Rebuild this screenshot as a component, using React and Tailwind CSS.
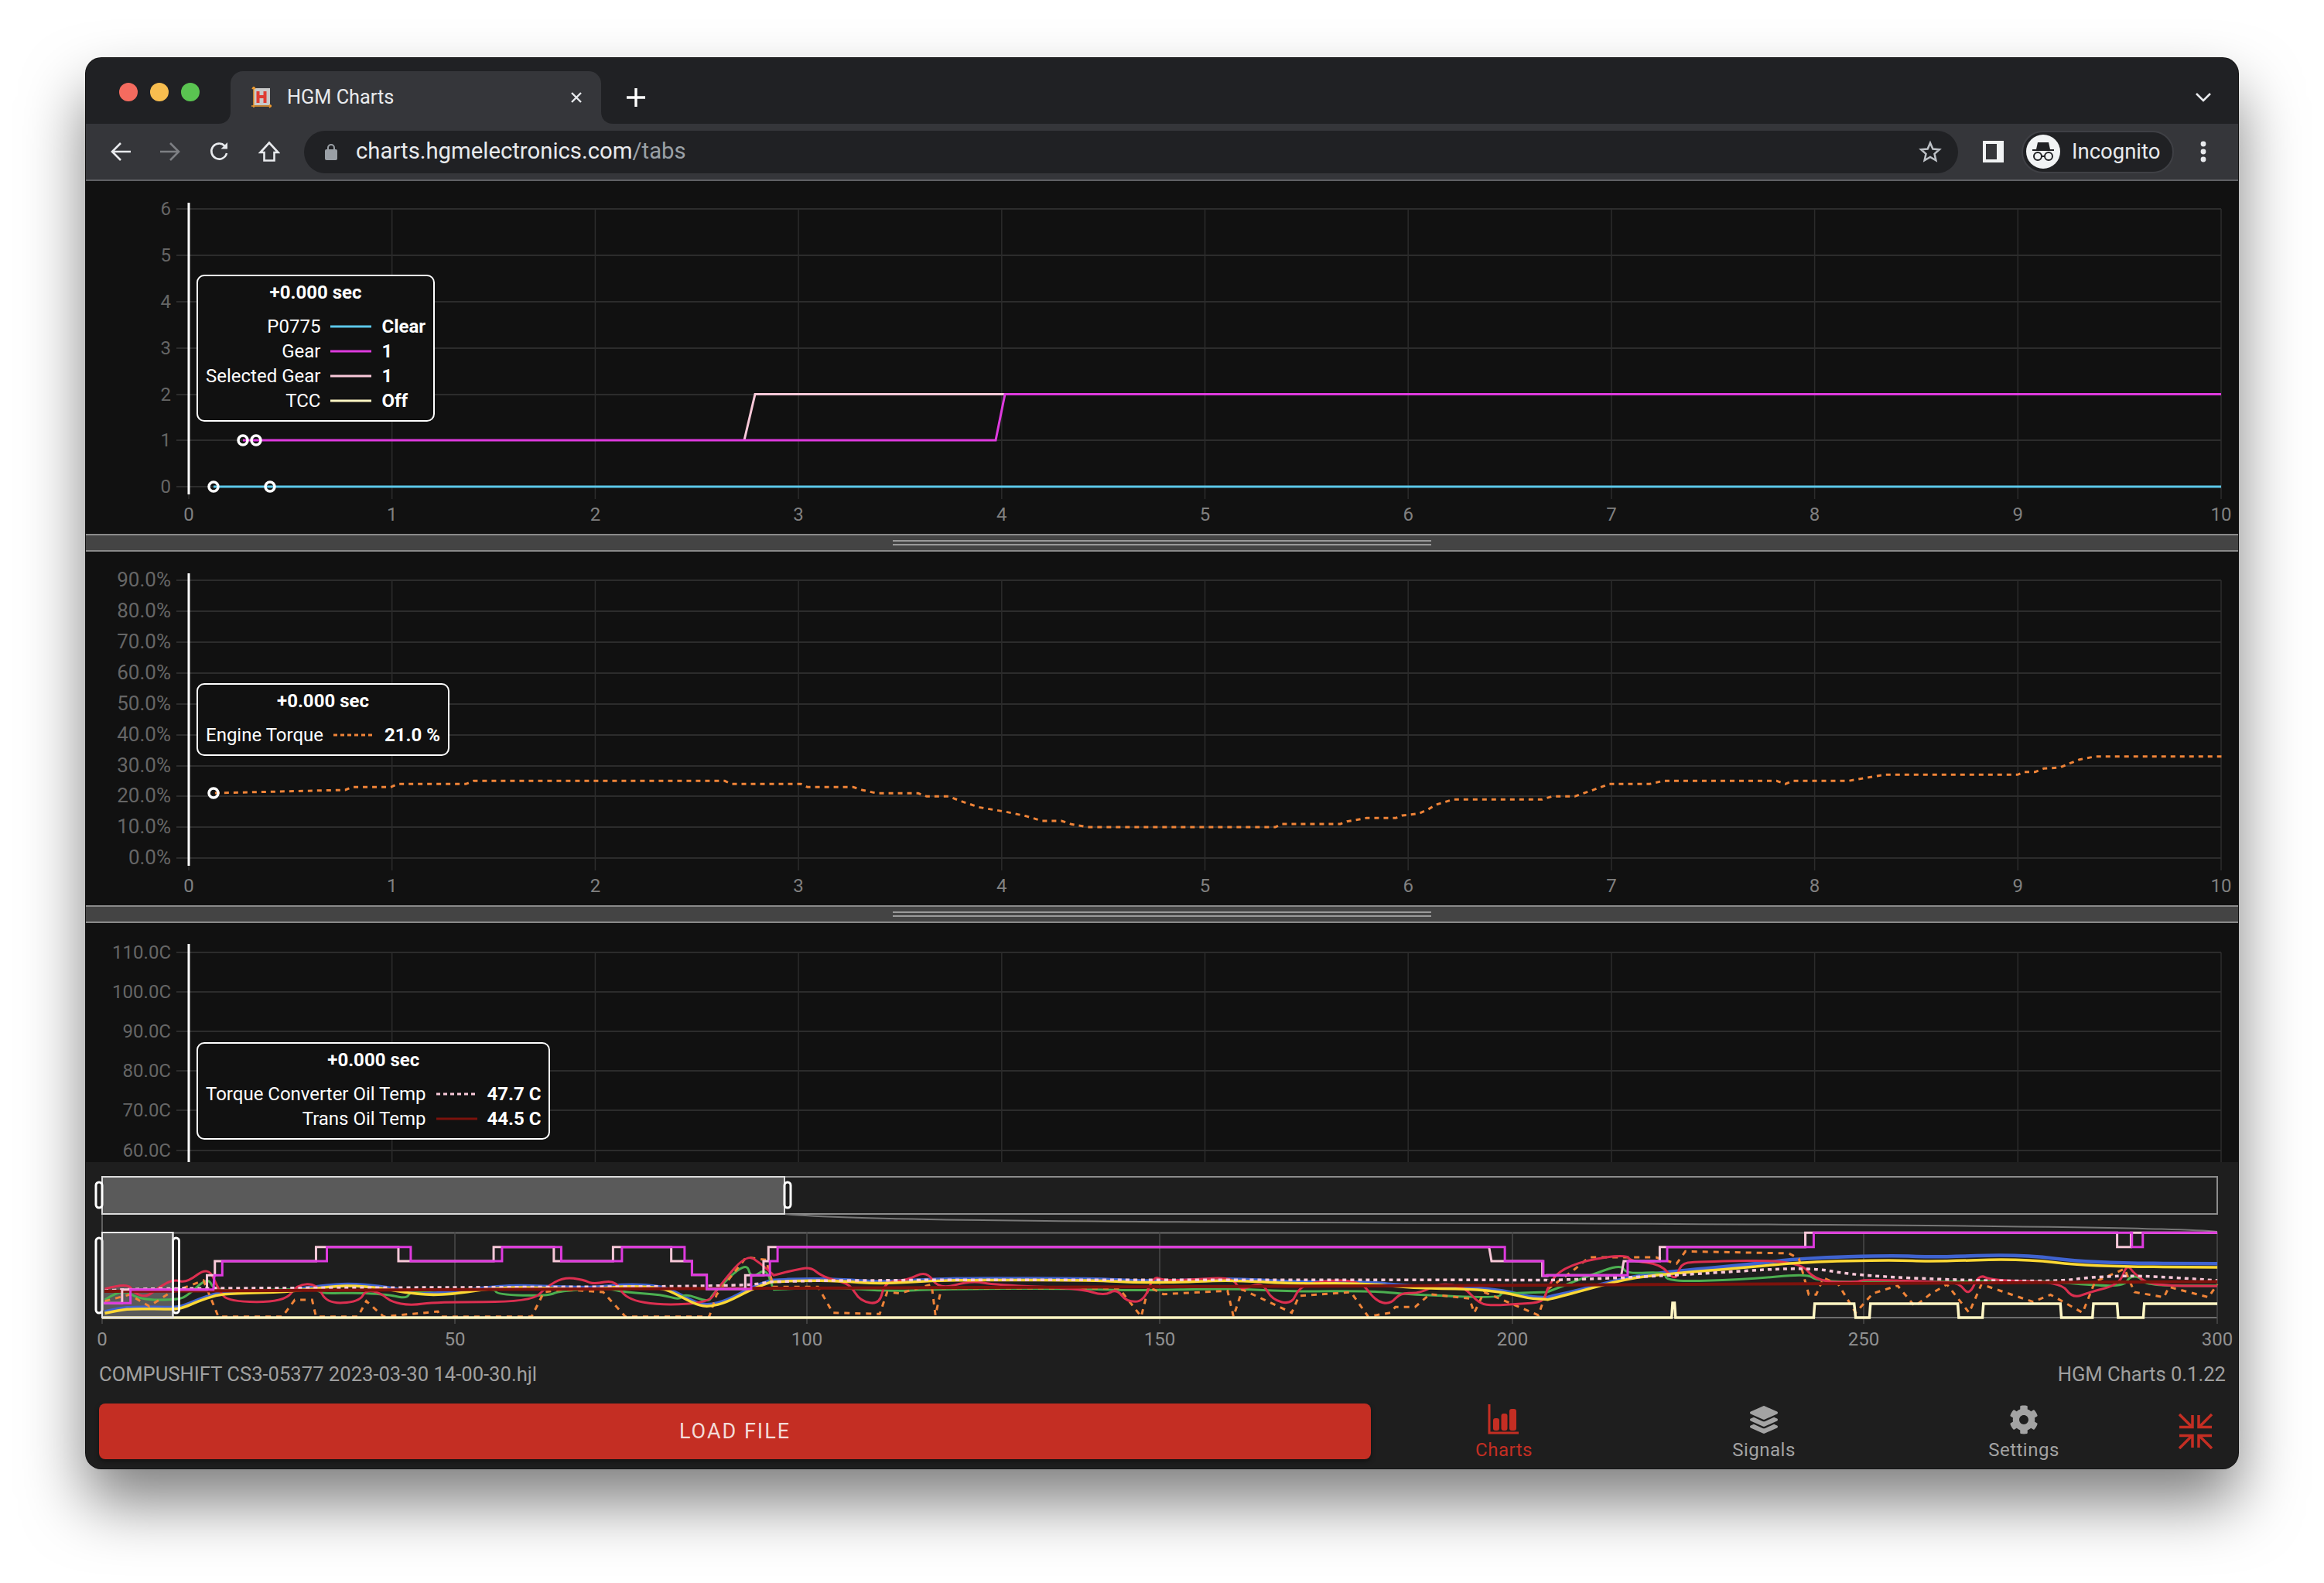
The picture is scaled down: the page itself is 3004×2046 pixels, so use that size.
import React from 'react';
import { FaLayerGroup, FaCog } from 'react-icons/fa';

const C = { cyan: '#5cc8ea', mag: '#de3ade', pink: '#f8c8d8', cream: '#fff6c4', orange: '#f08438', dred: '#7c120c', red: '#dc2f50', green: '#4caf50', blue: '#3f63d0', yellow: '#fdd835' };

const join = (pts) => pts.map((p) => p.join(',')).join(' ');
const zz = (ox, sx, oy, sy) => (pts) => pts.map(([x, y]) => [ox + x / sx, oy + y / sy]);
const Z4 = zz(110, 1.568, 1500, 3);
const Z5 = zz(1000, 1.568, 1500, 3);
const Z6 = zz(2000, 1.568, 1500, 3);
const pts3 = (a, b, c) => [...Z4(a.filter((p) => p[0] <= 1396)), ...Z5(b), ...Z6(c)];
const series = (a, b, c) => join(pts3(a, b, c));
const smooth = (a, b, c) => {
  const p = pts3(a, b, c);
  let d = `M${p[0][0]} ${p[0][1]}`;
  for (let i = 1; i < p.length - 1; i++) {
    const mx = (p[i][0] + p[i + 1][0]) / 2;
    const my = (p[i][1] + p[i + 1][1]) / 2;
    d += `Q${p[i][0]} ${p[i][1]} ${mx} ${my}`;
  }
  const l = p[p.length - 1];
  return d + `L${l[0]} ${l[1]}`;
};
const up = (pts, d) => pts.map(([x, y]) => [x, y - d]);

const torque = join([
  ...zz(240, 1.188, 970, 3)([[45,165],[245,153],[255,142],[315,142],[325,130],[430,130],[442,118],[828,118],[838,130],[945,130],[955,142],[1025,142],[1040,154],[1062,166],[1125,166],[1138,178],[1172,178],[1190,196],[1218,220],[1260,238],[1290,254],[1315,273],[1345,273],[1360,286],[1385,297],[1568,297]]),
  ...zz(1560, 1.188, 960, 3)([[0,327],[105,327],[115,315],[205,315],[215,305],[245,292],[290,292],[300,282],[325,275],[340,258],[352,240],[378,220],[515,220],[530,208],[565,208],[578,196],[592,184],[618,160],[680,160],[700,148],[875,148],[888,160],[900,148],[985,148],[1040,124],[1245,124],[1255,113],[1272,113],[1285,100],[1310,96],[1325,80],[1340,65],[1365,53],[1558,53]]),
]);

const gearA = [[38,553],[92,553],[92,500],[260,500],[262,445],[278,445],[278,390],[490,390],[490,335],[660,335],[660,390],[845,390],[845,335],[965,335],[965,390],[1088,390],[1088,335],[1215,335],[1215,390],[1230,390],[1230,443],[1260,443],[1260,498],[1350,498],[1350,445],[1388,445],[1388,390]];
const gearB = [[8,390],[8,335],[1482,335],[1482,390],[1560,390],[1560,447],[1568,447]];
const gearC = [[0,445],[163,445],[163,390],[243,390],[243,335],[540,335],[540,280],[1185,280],[1185,335],[1207,335],[1207,280],[1358,280]];
const pinkA = [[38,553],[75,553],[75,500],[247,500],[247,445],[263,445],[263,390],[468,390],[468,335],[635,335],[635,390],[828,390],[828,335],[950,335],[950,390],[1070,390],[1070,335],[1188,335],[1188,390],[1230,390],[1230,443],[1260,443],[1260,498],[1338,498],[1338,445],[1375,445],[1375,390],[1385,390],[1385,335]];
const pinkB = [[0,335],[1450,335],[1455,390],[1558,390],[1558,447],[1568,447]];
const pinkC = [[0,445],[150,445],[155,390],[228,390],[228,335],[523,335],[523,280],[1155,280],[1155,335],[1183,335],[1183,280],[1358,280]];
const tcc = [[0,609],[252,609],[254,552],[258,552],[260,609],[540,609],[542,555],[622,555],[625,609],[653,609],[655,555],[832,555],[834,609],[882,609],[884,555],[1040,555],[1042,609],[1105,609],[1107,555],[1155,555],[1157,609],[1208,609],[1210,555],[1358,555]];
const yelA = [[40,592],[70,580],[100,574],[180,577],[200,570],[230,545],[265,522],[300,515],[410,510],[480,492],[535,484],[600,494],[650,512],[700,522],[750,516],[800,502],[870,490],[940,495],[1030,500],[1100,486],[1170,494],[1200,520],[1240,560],[1265,567],[1300,550],[1350,500],[1390,470]];
const yelB = [[0,470],[60,465],[130,467],[220,478],[320,466],[420,463],[650,464],[740,474],[850,470],[930,463],[1050,478],[1190,475],[1300,495],[1410,498],[1480,510],[1530,535],[1568,538]];
const yelC = [[0,540],[60,510],[160,458],[240,440],[400,415],[520,393],[700,385],[780,392],[960,380],[1100,410],[1358,414]];
const bluC = [[0,530],[60,505],[160,455],[240,432],[400,405],[520,378],[700,368],[780,375],[960,363],[1100,397],[1358,400]];
const greA = [[40,540],[75,495],[110,540],[190,540],[210,520],[250,450],[262,510],[420,498],[470,500],[480,516],[560,512],[620,522],[652,535],[660,505],[830,495],[835,520],[940,525],[960,505],[1060,495],[1090,510],[1170,520],[1205,540],[1215,515],[1265,550],[1270,520],[1340,390],[1350,460],[1380,415],[1395,500]];
const greB = [[0,500],[120,490],[230,508],[340,498],[600,495],[740,505],[920,495],[1050,508],[1210,505],[1290,520],[1470,533],[1475,512],[1490,515],[1568,510]];
const greC = [[0,510],[80,450],[150,402],[160,440],[240,430],[240,470],[400,462],[530,438],[545,470],[720,472],[1000,465],[1110,485],[1170,485],[1180,450],[1200,450],[1215,485],[1358,485]];
const redA = [[40,498],[85,473],[100,515],[125,530],[150,490],[180,460],[205,475],[250,410],[270,500],[290,548],[405,548],[430,480],[470,478],[490,555],[555,548],[570,500],[600,515],[620,548],[660,562],[710,548],[905,548],[935,490],[970,452],[1010,462],[1030,480],[1075,462],[1095,538],[1170,562],[1265,550],[1280,500],[1340,362],[1370,400],[1396,445]];
const redB = [[0,445],[40,425],[75,413],[95,445],[125,465],[155,480],[175,545],[215,558],[225,470],[270,465],[310,427],[335,500],[400,465],[450,483],[620,495],[670,525],[695,497],[715,547],[750,547],[770,447],[790,465],[850,462],[930,452],[945,505],[990,470],[1010,540],[1050,558],[1065,490],[1110,465],[1190,465],[1220,545],[1250,558],[1270,512],[1310,515],[1350,475],[1400,490],[1430,555],[1460,562],[1510,555],[1560,550],[1568,500]];
const redC = [[0,500],[20,430],[80,385],[160,365],[170,390],[230,400],[260,470],[270,400],[300,392],[510,385],[545,470],[630,472],[640,460],[800,472],[835,475],[855,525],[875,440],[900,465],[1040,470],[1065,535],[1100,510],[1160,480],[1175,400],[1190,440],[1225,485],[1358,487]];
const oraA = [[40,545],[90,520],[130,565],[170,515],[240,465],[270,605],[400,605],[425,540],[460,540],[468,605],[553,605],[570,545],[605,605],[690,590],[715,585],[720,605],[905,605],[930,510],[970,500],[1050,510],[1095,605],[1265,605],[1280,520],[1340,375],[1380,385]];
const oraB = [[0,490],[90,490],[120,590],[215,595],[230,510],[255,515],[320,480],[328,600],[340,495],[700,495],[745,605],[760,490],[790,518],[920,505],[932,605],[950,500],[1050,590],[1065,525],[1170,510],[1205,605],[1250,590],[1260,568],[1300,568],[1330,518],[1410,535],[1420,590],[1440,510],[1550,600],[1568,500]];
const oraC = [[0,500],[50,430],[85,375],[220,375],[262,400],[280,352],[490,360],[510,380],[530,520],[545,520],[560,455],[590,480],[625,590],[660,515],[710,485],[745,565],[775,520],[810,480],[855,590],[880,480],[985,548],[1020,520],[1085,590],[1110,470],[1170,420],[1190,510],[1250,530],[1260,490],[1340,530],[1358,480]];
const pdotA = [[40,505],[80,498],[250,495],[1050,490],[1340,485],[1390,470]];
const pdotB = [[0,470],[100,465],[220,465],[330,462],[1568,463]];
const pdotC = [[0,464],[150,455],[300,440],[530,412],[620,445],[850,465],[1040,468],[1100,452],[1200,445],[1358,465]];

const XT = Array.from({ length: 11 }, (_, i) => 244 + i * 262.7);
const XEND = 2871;

function Grid({ ys, labels, bottom, xLabelY, top, size = 24 }) {
  return (
    <g>
      {ys.map((y) => <line key={y} x1="228" x2={XEND} y1={y} y2={y} stroke="#2c2c2c" strokeWidth="2" />)}
      {XT.map((x) => <line key={x} x1={x} x2={x} y1={top} y2={bottom} stroke="#2c2c2c" strokeWidth="1.5" />)}
      {ys.map((y, i) => <text key={y} x="221" y={y + 8} textAnchor="end" fontSize={size} fill="#666">{labels[i]}</text>)}
      {xLabelY && XT.map((x, i) => <text key={x} x={x} y={xLabelY} textAnchor="middle" fontSize="24" fill="#808080">{i}</text>)}
    </g>
  );
}

const Dot = ({ x, y }) => <circle cx={x} cy={y} r="6" fill="none" stroke="#fff" strokeWidth="3.5" />;

function Swatch({ color, dotted }) {
  return (
    <svg width="53" height="4" viewBox="0 0 53 4" className="block">
      <line x1="0" x2="53" y1="2" y2="2" stroke={color} strokeWidth="3" strokeDasharray={dotted ? '5 4' : undefined} />
    </svg>
  );
}

function Tooltip({ pos, rows }) {
  return (
    <div className={`absolute ${pos} rounded-[10px] border-2 border-white bg-[#111111] pt-[5px] pb-[9px] pl-[10px] pr-[10px] text-[24px] leading-[32px] text-white`}>
      <div className="mb-[12px] text-center font-bold">+0.000 sec</div>
      <div className="grid grid-cols-[auto_53px_auto] items-center gap-x-[13px]">
        {rows.map((r) => (
          <React.Fragment key={r.label}>
            <div className="text-right">{r.label}</div>
            <Swatch color={r.color} dotted={r.dotted} />
            <div className="font-bold">{r.value}</div>
          </React.Fragment>
        ))}
      </div>
    </div>
  );
}

function Divider() {
  return (
    <div className="flex h-[23px] flex-col items-center justify-center gap-[3px] border-y-2 border-[#8a8a8a] bg-[#444444]">
      <div className="h-[2px] w-[696px] bg-[#9a9a9a]" />
      <div className="h-[2px] w-[696px] bg-[#9a9a9a]" />
    </div>
  );
}

function MiniChart() {
  return (
    <svg width="2782" height="251" viewBox="111 1502 2782 251" className="block">
      <rect x="132" y="1521" width="2734" height="48" fill="none" stroke="#8c8c8c" strokeWidth="2" />
      <path d="M132 1569V1593" stroke="#777" strokeWidth="1.5" fill="none" />
      <path d="M1014 1569C1100 1578 1500 1580 2000 1581C2400 1583 2800 1585 2866 1592" stroke="#777" strokeWidth="2" fill="none" />
      <rect x="132" y="1521" width="882" height="48" fill="#5a5a5a" stroke="#dcdcdc" strokeWidth="2" />
      <rect x="124" y="1528" width="8" height="33" rx="4" fill="none" stroke="#fff" strokeWidth="3" />
      <rect x="1014" y="1528" width="8" height="33" rx="4" fill="none" stroke="#fff" strokeWidth="3" />

      <line x1="132" x2="2866" y1="1593.5" y2="1593.5" stroke="#6e6e6e" strokeWidth="2" />
      <line x1="132" x2="2866" y1="1703" y2="1703" stroke="#6e6e6e" strokeWidth="2" />
      {[132, 588, 1043, 1499, 1955, 2409, 2866].map((x) => <line key={x} x1={x} x2={x} y1="1593" y2="1711" stroke="#4a4a4a" strokeWidth="1.5" />)}
      <rect x="132" y="1593" width="91.5" height="110" fill="#5a5a5a" stroke="#dcdcdc" strokeWidth="2" />

      <path d={smooth(up(yelA, 6), up(yelB, 6), bluC)} fill="none" stroke={C.blue} strokeWidth="4.5" />
      <path d={smooth(greA, greB, greC)} fill="none" stroke={C.green} strokeWidth="3" />
      <polyline points={series(oraA, oraB, oraC)} fill="none" stroke={C.orange} strokeWidth="3" strokeDasharray="7 7" />
      <path d={smooth(redA, redB, redC)} fill="none" stroke={C.red} strokeWidth="3" />
      <path d={smooth(yelA, yelB, yelC)} fill="none" stroke={C.yellow} strokeWidth="3.5" />
      <path d={smooth(pdotA, pdotB, pdotC)} fill="none" stroke={C.pink} strokeWidth="3.5" strokeDasharray="5 5" />
      <polyline points={join([[135, 1669], [1000, 1665], [2000, 1661], [2866, 1656.5]])} fill="none" stroke={C.dred} strokeWidth="4" />
      <polyline points={series(pinkA, pinkB, pinkC)} fill="none" stroke={C.pink} strokeWidth="3" />
      <polyline points={series(gearA, gearB, gearC)} fill="none" stroke={C.mag} strokeWidth="3" />
      <polyline points={join([[132, 1703], [2000, 1703], ...Z6(tcc)])} fill="none" stroke={C.cream} strokeWidth="3.5" />

      <rect x="124" y="1600" width="8" height="97" rx="4" fill="none" stroke="#fff" strokeWidth="3" />
      <rect x="223.5" y="1600" width="8" height="97" rx="4" fill="none" stroke="#fff" strokeWidth="3" />
      <rect x="132" y="1593" width="91.5" height="110" fill="none" stroke="#e8e8e8" strokeWidth="2" />

      {[[132, 0], [588, 50], [1043, 100], [1499, 150], [1955, 200], [2409, 250], [2866, 300]].map(([x, t]) => (
        <text key={t} x={x} y="1739" textAnchor="middle" fontSize="24" fill="#909090">{t}</text>
      ))}
    </svg>
  );
}

function ChartsIcon() {
  return (
    <svg width="42" height="40" viewBox="0 0 42 40" className="block">
      <path d="M2 0V37H40" fill="none" stroke="#c42e23" strokeWidth="3" />
      <rect x="7" y="18" width="8" height="16" rx="3" fill="#c42e23" />
      <rect x="17.5" y="12" width="8" height="22" rx="3" fill="#c42e23" />
      <rect x="28" y="6" width="9" height="28" rx="3" fill="#c42e23" />
    </svg>
  );
}

function CollapseIcon() {
  return (
    <svg width="44" height="46" viewBox="0 0 44 46" className="block" fill="none" stroke="#c42e23" strokeWidth="3.5">
      <path d="M1 1L16 16M18 2V17.5H1" />
      <path d="M43 1L28 16M26 2V17.5H43" />
      <path d="M1 45L16 30M18 44V28.5H1" />
      <path d="M43 45L28 30M26 44V28.5H43" />
    </svg>
  );
}

function NavItem({ icon, label, active }) {
  return (
    <div className={`flex w-[336px] flex-col items-center ${active ? 'text-[#c42e23]' : 'text-[#a3a3a3]'}`}>
      <div className="flex h-[42px] items-center justify-center">{icon}</div>
      <div className="mt-[4px] text-[24px] leading-[28px] tracking-[0.5px]">{label}</div>
    </div>
  );
}

export default function App() {
  const cy = [270, 330, 390, 450, 510, 569, 629].reverse();
  const t = [1109, 1069, 1029, 990, 950, 910, 870, 830, 790, 750];
  const h = [1487, 1435, 1384, 1333, 1282, 1231];
  return (
    <div className="h-[2046px] overflow-hidden bg-white pl-[111px] pt-[75px] font-['Roboto',sans-serif]">
      <div className="h-[1823px] w-[2782px] overflow-hidden rounded-[20px] bg-[#202124] shadow-[0_0_0_1px_#111,0_44px_80px_rgba(0,0,0,0.5)]">
        {/* tab strip */}
        <div className="flex h-[85px] items-end bg-[#202124]">
          <div className="mb-[29px] flex w-[187px] gap-[16px] pl-[43px]">
            <div className="h-[24px] w-[24px] rounded-full bg-[#f46b5f]" />
            <div className="h-[24px] w-[24px] rounded-full bg-[#f7bd4f]" />
            <div className="h-[24px] w-[24px] rounded-full bg-[#5ac451]" />
          </div>
          <div className="relative flex h-[68px] w-[479px] items-center rounded-t-[16px] bg-[#35363a] pl-[27px] pr-[24px]">
            <svg width="26" height="28" viewBox="0 0 26 28" className="block">
              <rect x="3" y="2" width="21" height="22" fill="#c9c9c9" />
              <path d="M8.5 6v15M17.5 6v15M8.5 13h9" stroke="#df3c33" strokeWidth="4" fill="none" />
              <path d="M3 0v27M0 25h26M1 3l2-3 2 3M23 23l3 2-3 2" stroke="#ef9a2e" strokeWidth="1.5" fill="none" />
            </svg>
            <span className="ml-[20px] text-[25.3px] leading-none text-[#e8eaed]">HGM Charts</span>
            <svg width="16" height="16" viewBox="0 0 16 16" className="ml-auto block" stroke="#e8eaed" strokeWidth="2.4"><path d="M2 2l12 12M14 2L2 14" /></svg>
            <svg width="16" height="16" viewBox="0 0 16 16" className="absolute bottom-0 -left-[16px] block"><path d="M0 16C10 16 16 10 16 0V16Z" fill="#35363a" /></svg>
            <svg width="16" height="16" viewBox="0 0 16 16" className="absolute bottom-0 -right-[16px] block"><path d="M16 16C6 16 0 10 0 0V16Z" fill="#35363a" /></svg>
          </div>
          <svg width="26" height="26" viewBox="0 0 26 26" className="mb-[21px] ml-[32px] block" stroke="#fff" strokeWidth="3.4"><path d="M13 1v24M1 13h24" /></svg>
          <svg width="20" height="12" viewBox="0 0 20 12" className="mb-[28px] ml-auto mr-[35px] block" fill="none" stroke="#e8eaed" strokeWidth="2.6"><path d="M1 1l9 9 9-9" /></svg>
        </div>
        {/* toolbar */}
        <div className="flex h-[74px] items-center border-b-2 border-[#5f6064] bg-[#35363a] pl-[13px]">
          <div className="flex w-[64px] justify-center">
            <svg width="26" height="26" viewBox="0 0 26 26" fill="none" stroke="#e8eaed" strokeWidth="2.6"><path d="M13 2L2 13l11 11M2 13h24" /></svg>
          </div>
          <div className="flex w-[64px] justify-center">
            <svg width="26" height="26" viewBox="0 0 26 26" fill="none" stroke="#7d7f83" strokeWidth="2.6"><path d="M13 2l11 11-11 11M24 13H0" /></svg>
          </div>
          <div className="flex w-[64px] justify-center">
            <svg width="28" height="28" viewBox="0 0 28 28" fill="none" stroke="#e8eaed" strokeWidth="2.6"><path d="M23 16a10 10 0 1 1-2.6-9.5" /><path d="M24 2v8.5h-8.5z" fill="#e8eaed" stroke="none" /></svg>
          </div>
          <div className="flex w-[64px] justify-center">
            <svg width="28" height="28" viewBox="0 0 28 28" fill="none" stroke="#e8eaed" strokeWidth="2.6"><path d="M14 2.5L2.5 15h5v10.5h13V15h5z" /></svg>
          </div>
          <div className="ml-[13px] flex h-[55px] w-[2138px] items-center rounded-full bg-[#202124] pl-[27px] pr-[21px]">
            <svg width="16" height="22" viewBox="0 0 16 22" className="block" fill="#9aa0a6"><path d="M4 9V6a4 4 0 0 1 8 0v3" fill="none" stroke="#9aa0a6" strokeWidth="2" /><rect x="0" y="8" width="16" height="14" rx="2" /></svg>
            <span className="ml-[24px] text-[29.3px] leading-none text-[#e8eaed]">charts.hgmelectronics.com<span className="text-[#9aa0a6]">/tabs</span></span>
            <svg width="30" height="30" viewBox="0 0 24 24" className="ml-auto block" fill="none" stroke="#bdc1c6" strokeWidth="2" strokeLinejoin="miter"><path d="M12 3l2.7 6.2 6.8.6-5.1 4.5 1.5 6.7-5.9-3.5-5.9 3.5 1.5-6.7L2.5 9.8l6.8-.6z" /></svg>
          </div>
          <div className="ml-[32px] flex h-[28px] w-[27px] bg-[#f1f3f4] pb-[4px] pl-[4px] pt-[4px]">
            <div className="h-full w-[14px] bg-[#35363a]" />
          </div>
          <div className="ml-[23px] flex h-[55px] w-[197px] items-center rounded-full border-2 border-[#3f4045] bg-[#202124] pl-[4px]">
            <div className="flex h-[44px] w-[44px] items-center justify-center rounded-full bg-[#f1f3f4]">
              <svg width="34" height="34" viewBox="0 0 34 34" fill="#202124"><path d="M10 5h14l2 9H8z" /><rect x="3" y="14" width="28" height="2" /><circle cx="10" cy="23" r="5" fill="none" stroke="#202124" strokeWidth="2" /><circle cx="24" cy="23" r="5" fill="none" stroke="#202124" strokeWidth="2" /><path d="M15 23h4" stroke="#202124" strokeWidth="2" /></svg>
            </div>
            <span className="ml-[15px] text-[27.5px] leading-none text-[#e8eaed]">Incognito</span>
          </div>
          <svg width="8" height="28" viewBox="0 0 8 28" className="ml-[34px] block" fill="#e8eaed"><circle cx="4" cy="4" r="3.4" /><circle cx="4" cy="14" r="3.4" /><circle cx="4" cy="24" r="3.4" /></svg>
        </div>

        {/* chart 1 */}
        <div className="relative h-[456px] bg-[#111111]">
          <svg width="2782" height="456" viewBox="111 234 2782 456" className="block">
            <Grid ys={cy} labels={[0, 1, 2, 3, 4, 5, 6]} top={270} bottom={645} xLabelY={673} />
            <line x1="276" x2={XEND} y1="629" y2="629" stroke={C.cyan} strokeWidth="3" />
            <polyline points="962,569 976,509.5 1299,509.5" fill="none" stroke={C.pink} strokeWidth="3" />
            <polyline points={`314,569 1287,569 1299,509.5 ${XEND},509.5`} fill="none" stroke={C.mag} strokeWidth="3" />
            <line x1="244" x2="244" y1="262" y2="639" stroke="#fff" strokeWidth="3" />
            <Dot x={276} y={629} /><Dot x={349} y={629} /><Dot x={314} y={569} /><Dot x={331} y={569} />
          </svg>
          <Tooltip pos="left-[143px] top-[121px]" rows={[
            { label: 'P0775', color: C.cyan, value: 'Clear' },
            { label: 'Gear', color: C.mag, value: '1' },
            { label: 'Selected Gear', color: C.pink, value: '1' },
            { label: 'TCC', color: C.cream, value: 'Off' },
          ]} />
        </div>
        <Divider />
        {/* chart 2 */}
        <div className="relative h-[457px] bg-[#111111]">
          <svg width="2782" height="457" viewBox="111 713 2782 457" className="block">
            <Grid size={26} ys={t} labels={['0.0%', '10.0%', '20.0%', '30.0%', '40.0%', '50.0%', '60.0%', '70.0%', '80.0%', '90.0%']} top={750} bottom={1125} xLabelY={1153} />
            <polyline points={torque} fill="none" stroke={C.orange} strokeWidth="3" strokeDasharray="6 6" />
            <line x1="244" x2="244" y1="741" y2="1119" stroke="#fff" strokeWidth="3" />
            <Dot x={276} y={1025} />
          </svg>
          <Tooltip pos="left-[143px] top-[170px]" rows={[{ label: 'Engine Torque', color: C.orange, dotted: true, value: '21.0 %' }]} />
        </div>
        <Divider />
        {/* chart 3 */}
        <div className="relative h-[309px] overflow-hidden bg-[#111111]">
          <svg width="2782" height="309" viewBox="111 1193 2782 309" className="block">
            <Grid ys={h} labels={['60.0C', '70.0C', '80.0C', '90.0C', '100.0C', '110.0C']} top={1231} bottom={1502} />
            <line x1="244" x2="244" y1="1220" y2="1502" stroke="#fff" strokeWidth="3" />
          </svg>
          <Tooltip pos="left-[143px] top-[154px]" rows={[
            { label: 'Torque Converter Oil Temp', color: C.pink, dotted: true, value: '47.7 C' },
            { label: 'Trans Oil Temp', color: C.dred, value: '44.5 C' },
          ]} />
        </div>
        {/* bottom panel */}
        <div className="h-[395px] bg-[#1e1e1e]">
          <MiniChart />
          <div className="flex h-[47px] items-center justify-between pl-[17px] pr-[16px] text-[25.6px] text-[#a0a0a0]">
            <span>COMPUSHIFT CS3-05377 2023-03-30 14-00-30.hjl</span>
            <span>HGM Charts 0.1.22</span>
          </div>
          <div className="flex h-[97px] items-start pl-[17px] pt-[14px]">
            <div className="flex h-[72px] w-[1644px] items-center justify-center rounded-[8px] bg-[#c42e23] text-[27px] tracking-[2px] text-[#f3dcd9] shadow-[0_3px_6px_rgba(0,0,0,0.4)]">LOAD FILE</div>
            <div className="ml-[4px] flex items-start">
              <NavItem active icon={<ChartsIcon />} label="Charts" />
              <NavItem icon={<FaLayerGroup size={36} />} label="Signals" />
              <NavItem icon={<FaCog size={38} />} label="Settings" />
            </div>
            <div className="ml-[32px] mt-[13px]"><CollapseIcon /></div>
          </div>
        </div>
      </div>
    </div>
  );
}
